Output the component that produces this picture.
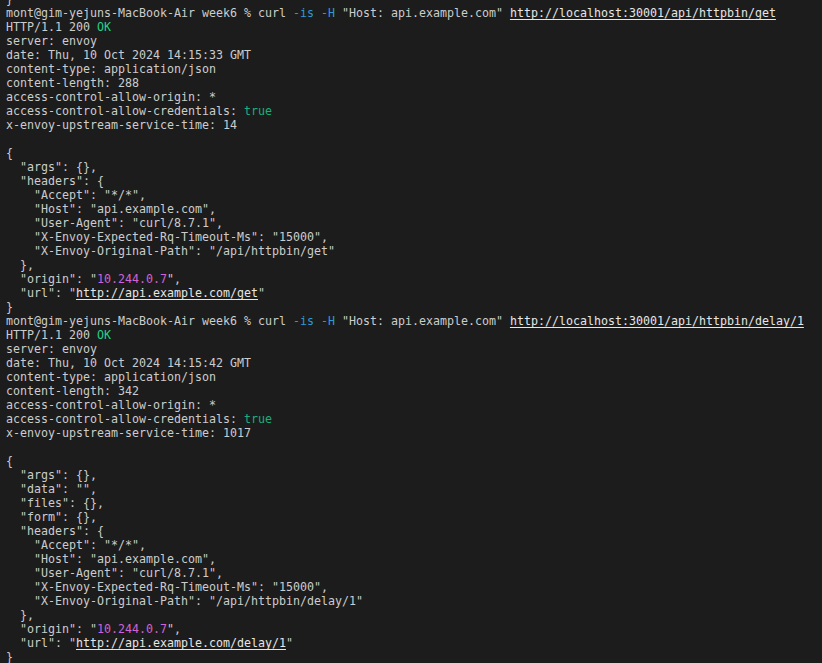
import React from "react";

type Seg = { t: string; c?: string; u?: boolean };

const G = "text-[#23d18b]";
const T = "text-[#16b07b]";
const B = "text-[#2b9ad4]";
const M = "text-[#d062d6]";

function prompt(url: string): Seg[] {
  return [
    { t: "mont@gim-yejuns-MacBook-Air week6 % curl " },
    { t: "-is", c: B },
    { t: " " },
    { t: "-H", c: B },
    { t: ' "Host: api.example.com" ' },
    { t: url, u: true },
  ];
}

function headers(date: string, len: string, time: string): Seg[][] {
  return [
    [{ t: "HTTP/1.1 200 " }, { t: "OK", c: G }],
    [{ t: "server: envoy" }],
    [{ t: `date: ${date}` }],
    [{ t: "content-type: application/json" }],
    [{ t: `content-length: ${len}` }],
    [{ t: "access-control-allow-origin: *" }],
    [{ t: "access-control-allow-credentials: " }, { t: "true", c: T }],
    [{ t: `x-envoy-upstream-service-time: ${time}` }],
    [{ t: "" }],
  ];
}

const lines: Seg[][] = [
  [{ t: "}" }],
  prompt("http://localhost:30001/api/httpbin/get"),
  ...headers("Thu, 10 Oct 2024 14:15:33 GMT", "288", "14"),
  [{ t: "{" }],
  [{ t: '  "args": {},' }],
  [{ t: '  "headers": {' }],
  [{ t: '    "Accept": "*/*",' }],
  [{ t: '    "Host": "api.example.com",' }],
  [{ t: '    "User-Agent": "curl/8.7.1",' }],
  [{ t: '    "X-Envoy-Expected-Rq-Timeout-Ms": "15000",' }],
  [{ t: '    "X-Envoy-Original-Path": "/api/httpbin/get"' }],
  [{ t: "  }," }],
  [{ t: '  "origin": "' }, { t: "10.244.0.7", c: M }, { t: '",' }],
  [{ t: '  "url": "' }, { t: "http://api.example.com/get", u: true }, { t: '"' }],
  [{ t: "}" }],
  prompt("http://localhost:30001/api/httpbin/delay/1"),
  ...headers("Thu, 10 Oct 2024 14:15:42 GMT", "342", "1017"),
  [{ t: "{" }],
  [{ t: '  "args": {},' }],
  [{ t: '  "data": "",' }],
  [{ t: '  "files": {},' }],
  [{ t: '  "form": {},' }],
  [{ t: '  "headers": {' }],
  [{ t: '    "Accept": "*/*",' }],
  [{ t: '    "Host": "api.example.com",' }],
  [{ t: '    "User-Agent": "curl/8.7.1",' }],
  [{ t: '    "X-Envoy-Expected-Rq-Timeout-Ms": "15000",' }],
  [{ t: '    "X-Envoy-Original-Path": "/api/httpbin/delay/1"' }],
  [{ t: "  }," }],
  [{ t: '  "origin": "' }, { t: "10.244.0.7", c: M }, { t: '",' }],
  [{ t: '  "url": "' }, { t: "http://api.example.com/delay/1", u: true }, { t: '"' }],
  [{ t: "}" }],
];

export default function App() {
  return (
    <div className="w-[822px] h-[663px] overflow-hidden bg-[#1c1c1c]">
      <div
        className="mt-[-8px] pl-[6px] text-[#cccccc] text-[11.63px] leading-[14px] whitespace-pre"
        style={{ fontFamily: '"DejaVu Sans Mono", "Liberation Mono", monospace' }}
      >
        {lines.map((segs, i) => (
          <div key={i} className="h-[14px]">
            {segs.map((s, j) => (
              <span
                key={j}
                className={`${s.c ?? ""} ${s.u ? "underline underline-offset-2 text-[#e6e6e6]" : ""}`}
              >
                {s.t}
              </span>
            ))}
            {segs.length === 1 && segs[0].t === "" ? "\u00a0" : null}
          </div>
        ))}
      </div>
    </div>
  );
}
